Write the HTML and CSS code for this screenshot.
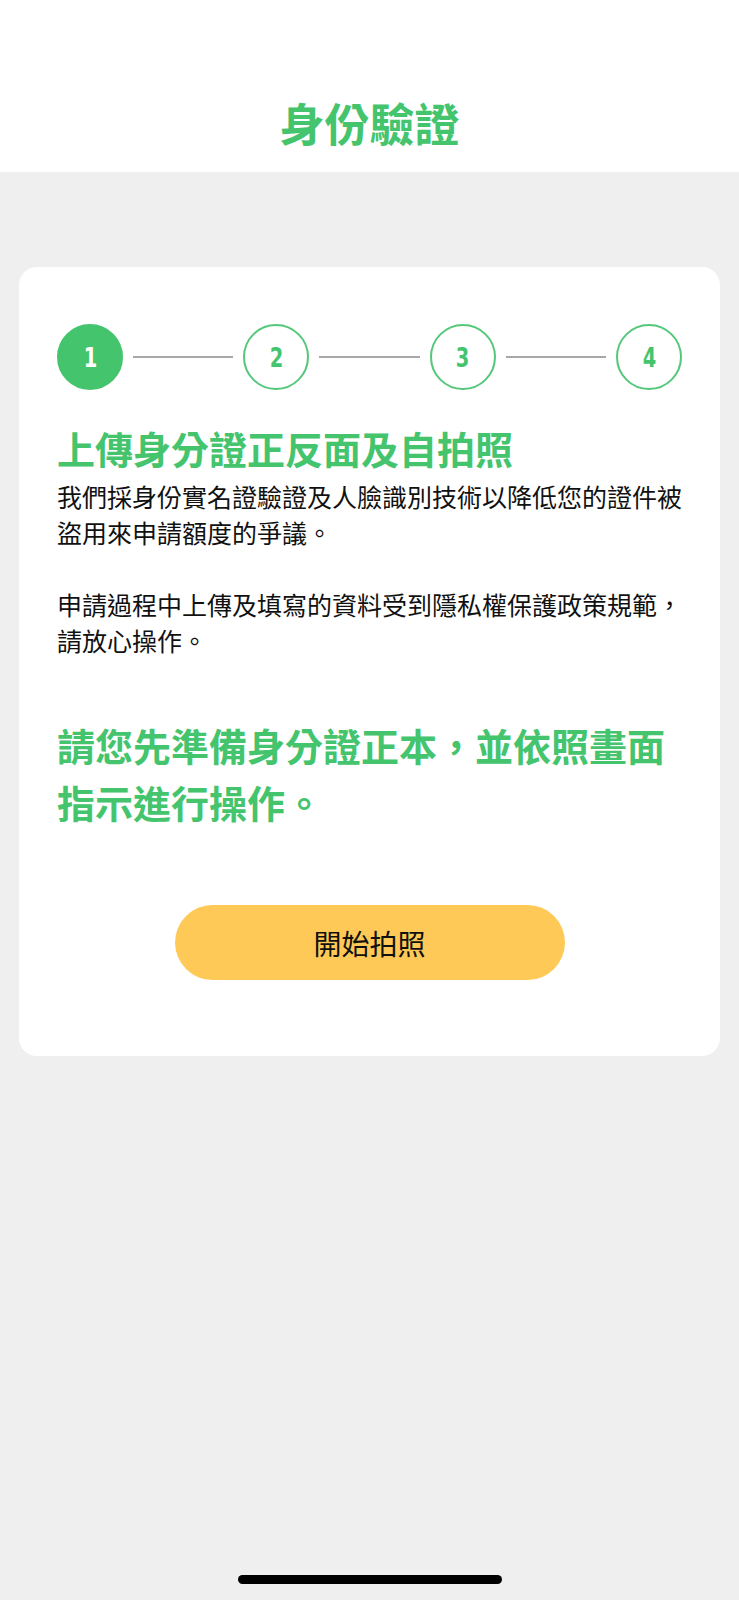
FILE: index.html
```html
<!DOCTYPE html>
<html lang="zh-Hant">
<head>
<meta charset="utf-8">
<title>身份驗證</title>
<link rel="stylesheet" href="styles.css">
</head>
<body>
<header class="header">
  <h1 class="title">身份驗證</h1>
</header>
<main class="card">
  <div class="steps">
    <div class="step step-active"><span class="step-num">1</span></div>
    <div class="step-line"></div>
    <div class="step"><span class="step-num">2</span></div>
    <div class="step-line"></div>
    <div class="step"><span class="step-num">3</span></div>
    <div class="step-line"></div>
    <div class="step"><span class="step-num">4</span></div>
  </div>
  <h2 class="heading">上傳身分證正反面及自拍照</h2>
  <p class="text">我們採身份實名證驗證及人臉識別技術以降低您的證件被<br>盜用來申請額度的爭議。</p>
  <p class="text text-gap">申請過程中上傳及填寫的資料受到隱私權保護政策規範，<br>請放心操作。</p>
  <p class="callout">請您先準備身分證正本，並依照畫面<br>指示進行操作。</p>
  <div class="actions">
    <button class="btn" type="button">開始拍照</button>
  </div>
</main>
<div class="home-indicator"></div>
</body>
</html>
```

FILE: styles.css
```css
html, body {
  margin: 0;
  padding: 0;
  background: #efefef;
}
body {
  min-height: 1600px;
  font-family: "Noto Sans CJK TC", "Noto Sans", sans-serif;
  color: #111;
}
.header {
  background: #ffffff;
  height: 172px;
  box-sizing: border-box;
  padding-top: 93px;
}
.title {
  margin: 0;
  text-align: center;
  font-size: 45px;
  line-height: 60px;
  font-weight: 700;
  color: #45c46e;
}
.card {
  display: block;
  margin: 95px 19px 0;
  background: #ffffff;
  border-radius: 18px;
  padding: 57px 38px 76px;
}
.steps {
  display: flex;
  align-items: center;
  height: 66px;
}
.step {
  width: 66px;
  height: 66px;
  box-sizing: border-box;
  border: 2px solid #55c77a;
  border-radius: 50%;
  display: flex;
  align-items: center;
  justify-content: center;
  color: #45c46e;
  flex: none;
}
.step-num {
  display: inline-block;
  font-family: "DejaVu Sans Condensed", "DejaVu Sans", sans-serif;
  font-weight: 700;
  font-size: 27px;
  line-height: 1;
  transform: scaleX(0.8);
}
.step-active {
  background: #45c46e;
  border-color: #45c46e;
  color: #ffffff;
}
.step-line {
  flex: 1;
  height: 2px;
  background: #a8a8a8;
  margin: 0 10px;
}
.heading {
  margin: 34px 0 0;
  font-size: 38px;
  line-height: 48px;
  font-weight: 700;
  color: #45c46e;
  white-space: nowrap;
}
.text {
  margin: 6px 0 0;
  font-size: 25px;
  line-height: 36px;
  font-weight: 400;
  color: #111;
  white-space: nowrap;
}
.text-gap {
  margin-top: 36px;
}
.callout {
  margin: 58px 0 0;
  font-size: 38px;
  line-height: 57px;
  font-weight: 700;
  color: #45c46e;
  white-space: nowrap;
}
.actions {
  display: flex;
  justify-content: center;
  margin-top: 75px;
}
.btn {
  width: 390px;
  height: 75px;
  border: none;
  border-radius: 38px;
  background: #fec956;
  font-family: "Noto Sans CJK TC", "Noto Sans", sans-serif;
  font-size: 28px;
  font-weight: 400;
  color: #111;
  padding: 0;
  cursor: pointer;
}
.home-indicator {
  position: fixed;
  left: 50%;
  bottom: 16px;
  width: 264px;
  height: 9px;
  margin-left: -132px;
  border-radius: 5px;
  background: #000;
}
```
